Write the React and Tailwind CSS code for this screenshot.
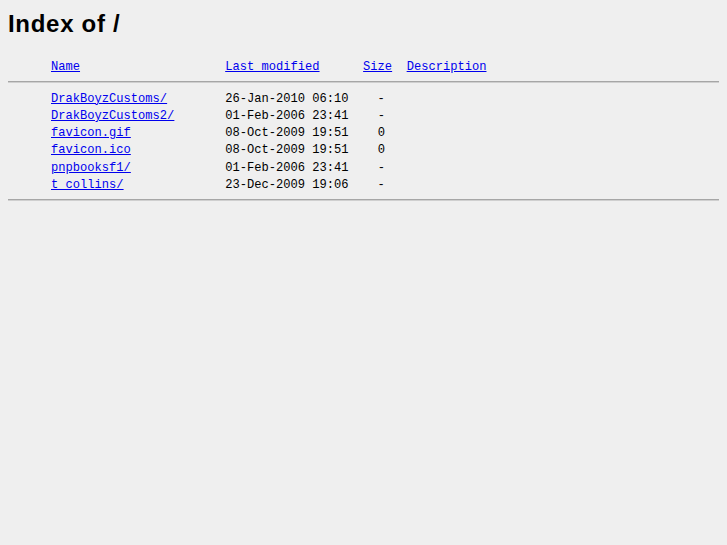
import React from "react";

const rows = [
  { name: "DrakBoyzCustoms/", date: "26-Jan-2010 06:10", size: "-" },
  { name: "DrakBoyzCustoms2/", date: "01-Feb-2006 23:41", size: "-" },
  { name: "favicon.gif", date: "08-Oct-2009 19:51", size: "0" },
  { name: "favicon.ico", date: "08-Oct-2009 19:51", size: "0" },
  { name: "pnpbooksf1/", date: "01-Feb-2006 23:41", size: "-" },
  { name: "t_collins/", date: "23-Dec-2009 19:06", size: "-" },
];

const link = "text-[#0000ee] underline";

export default function App() {
  return (
    <div className="min-h-screen bg-[#efefef] p-2 text-black">
      {/* heading */}
      <h1 className="mt-[2px] text-[24px] leading-[28px] tracking-[0.7px] font-bold font-['Liberation_Sans',Arial,sans-serif]">
        Index of /
      </h1>

      {/* listing */}
      <div className="mt-[21px] whitespace-pre text-[12.1px] leading-[17.3px] font-['Liberation_Mono','Courier_New',monospace]">
        <div className="pl-[43px]">
          <a href="#" className={link}>Name</a>
          {" ".repeat(20)}
          <a href="#" className={link}>Last modified</a>
          {" ".repeat(6)}
          <a href="#" className={link}>Size</a>
          {"  "}
          <a href="#" className={link}>Description</a>
        </div>

        <div className="mt-[4.7px] h-[2px] border-t border-b border-t-[#a6a6a6] border-b-[#cfcfcf]"></div>

        <div className="mt-[7.6px] pl-[43px]">
          {rows.map((r) => (
            <div key={r.name}>
              <a href="#" className={link}>{r.name}</a>
              {" ".repeat(24 - r.name.length)}
              {r.date}
              {"    "}
              {r.size}
            </div>
          ))}
        </div>

        <div className="mt-[5px] h-[2px] border-t border-b border-t-[#a6a6a6] border-b-[#cfcfcf]"></div>
      </div>
    </div>
  );
}
